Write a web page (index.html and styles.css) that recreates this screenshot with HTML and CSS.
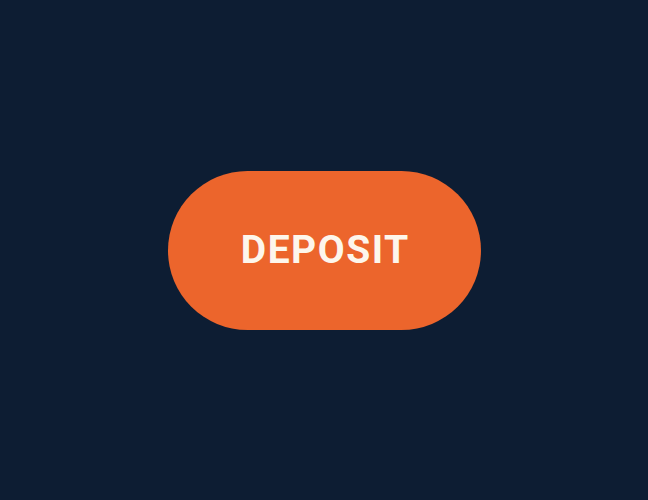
FILE: index.html
```html
<!DOCTYPE html>
<html>
<head>
<meta charset="utf-8">
<link rel="stylesheet" href="styles.css">
</head>
<body>
<div class="page">
  <button class="deposit">DEPOSIT</button>
</div>
</body>
</html>
```

FILE: styles.css
```css
html, body {
  margin: 0;
  padding: 0;
  background: #0d1d33;
}
.page {
  width: 648px;
  height: 500px;
  display: flex;
  align-items: center;
  justify-content: center;
}
.deposit {
  width: 313px;
  height: 159px;
  border: none;
  border-radius: 80px;
  background: #ec652c;
  color: #fdf6ec;
  font-family: Roboto, "Liberation Sans", sans-serif;
  font-weight: 700;
  font-size: 39px;
  letter-spacing: 1.5px;
  text-indent: 1.5px;
  padding: 0;
  margin-left: 1px;
}
```
